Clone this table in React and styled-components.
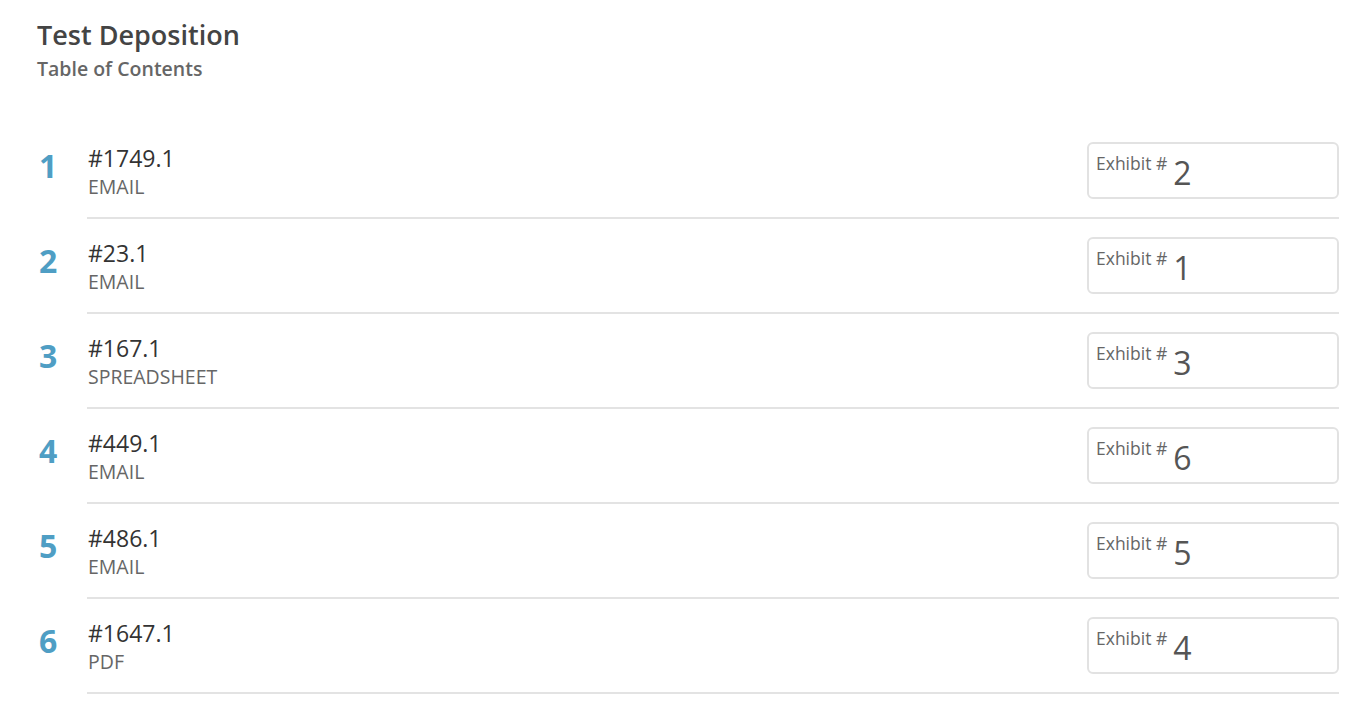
import React from "react";
import styled, { createGlobalStyle } from "styled-components";

const Global = createGlobalStyle`
  html, body { margin: 0; padding: 0; background: #fff; }
  body { font-family: "Open Sans", "Noto Sans", sans-serif; color: #333; }
`;

const Page = styled.div`
  padding: 17px 27px 0 37px;
`;

const Header = styled.header`
  display: flex;
  flex-direction: column;
  margin-bottom: 43px;
`;

const Title = styled.h1`
  margin: 0;
  font-size: 27px;
  line-height: 36px;
  font-weight: 600;
  color: #444;
`;

const Subtitle = styled.h2`
  margin: 4px 0 0;
  font-size: 19.5px;
  line-height: 24px;
  font-weight: 600;
  color: #666;
`;

const List = styled.ol`
  list-style: none;
  margin: 0;
  padding: 0;
`;

const Row = styled.li`
  display: flex;
  align-items: stretch;
`;

const Index = styled.div`
  width: 50px;
  flex: none;
  font-size: 32px;
  font-weight: 700;
  color: #4f9ec4;
  padding: 22px 0 0 2px;
  line-height: 40px;
  box-sizing: border-box;
`;

const Body = styled.div`
  flex: 1;
  display: flex;
  align-items: center;
  justify-content: space-between;
  height: 95px;
  border-bottom: 2px solid #e3e3e3;
  box-sizing: border-box;
`;

const Info = styled.div`
  display: flex;
  flex-direction: column;
  padding: 2px 0 0 1px;
`;

const DocId = styled.div`
  font-size: 23px;
  line-height: 31px;
  color: #333;
`;

const DocType = styled.div`
  font-size: 19.5px;
  line-height: 26px;
  color: #666;
`;

const ExhibitBox = styled.div`
  width: 252px;
  height: 57px;
  box-sizing: border-box;
  border: 2px solid #e2e2e2;
  border-radius: 6px;
  display: flex;
  align-items: flex-start;
  padding: 7px 7px;
  gap: 6px;
`;

const ExhibitLabel = styled.span`
  font-size: 17.5px;
  line-height: 24px;
  color: #666;
`;

const ExhibitNum = styled.span`
  font-size: 32px;
  line-height: 32px;
  margin-top: 6px;
  color: #555;
`;

const rows = [
  { n: 1, id: "#1749.1", type: "EMAIL", ex: 2 },
  { n: 2, id: "#23.1", type: "EMAIL", ex: 1 },
  { n: 3, id: "#167.1", type: "SPREADSHEET", ex: 3 },
  { n: 4, id: "#449.1", type: "EMAIL", ex: 6 },
  { n: 5, id: "#486.1", type: "EMAIL", ex: 5 },
  { n: 6, id: "#1647.1", type: "PDF", ex: 4 },
];

export default function App() {
  return (
    <Page>
      <Global />
      <Header>
        <Title>Test Deposition</Title>
        <Subtitle>Table of Contents</Subtitle>
      </Header>
      <List>
        {rows.map((r) => (
          <Row key={r.n}>
            <Index>{r.n}</Index>
            <Body>
              <Info>
                <DocId>{r.id}</DocId>
                <DocType>{r.type}</DocType>
              </Info>
              <ExhibitBox>
                <ExhibitLabel>Exhibit #</ExhibitLabel>
                <ExhibitNum>{r.ex}</ExhibitNum>
              </ExhibitBox>
            </Body>
          </Row>
        ))}
      </List>
    </Page>
  );
}
